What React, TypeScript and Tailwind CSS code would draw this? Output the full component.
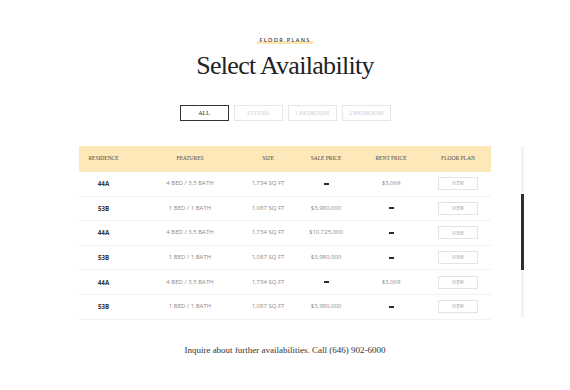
const rows = [
    {res: "44A", features: "4 BED / 3.5 BATH", size: "1,734 SQ FT", sale: "", rent: "$3,069"},
    {res: "53B", features: "1 BED / 1 BATH", size: "1,087 SQ FT", sale: "$3,980,000", rent: ""},
    {res: "44A", features: "4 BED / 3.5 BATH", size: "1,734 SQ FT", sale: "$10,725,000", rent: ""},
    {res: "53B", features: "1 BED / 1 BATH", size: "1,087 SQ FT", sale: "$3,980,000", rent: ""},
    {res: "44A", features: "4 BED / 3.5 BATH", size: "1,734 SQ FT", sale: "", rent: "$3,069"},
    {res: "53B", features: "1 BED / 1 BATH", size: "1,087 SQ FT", sale: "$3,980,000", rent: ""},
]

const tabs = ["ALL", "STUDIO", "1 BEDROOM", "2 BEDROOM"]

const serif = "font-['Liberation_Serif',serif]"
const sans = "font-['Open_Sans',sans-serif]"

function Dash() {
    return <span className="inline-block w-[5px] h-[2px] bg-[#2b2b2b]"/>
}

function Cell({children, className = ""}: { children?: React.ReactNode, className?: string }) {
    return <div className={`flex items-center justify-center whitespace-nowrap ${className}`}>{children}</div>
}

// column widths tuned so each column's centre sits where the picture has it
const cols = "grid grid-cols-[49px_124px_32px_84px_46px_77px]"

export default function App() {
    return (
        <div className="w-[570px] h-[390px] bg-white flex flex-col items-center overflow-hidden">
            <div className="mt-[36px] relative px-[2px]">
                <span className="absolute left-0 right-0 bottom-[0px] h-[3px] bg-[#fde6b2]"/>
                <span
                    className={`relative block ${sans} font-semibold text-[5.5px] leading-[8px] tracking-[1.3px] text-[#3a3a3a]`}>
                    FLOOR PLANS
                </span>
            </div>

            <h1 className={`mt-[7px] ${serif} text-[26px] leading-[30px] tracking-[-0.7px] text-[#222]`}>
                Select Availability
            </h1>

            <div className="mt-[24px] flex gap-[5px]">
                {tabs.map((t, i) => (
                    <div
                        key={t}
                        className={`w-[49px] h-[16px] flex items-center justify-center ${serif} text-[6px] ${
                            i === 0 ? "border border-[#333] text-[#222]" : "border border-[#e6e6e6] text-[#cfcfcf]"
                        }`}
                    >
                        {t}
                    </div>
                ))}
            </div>

            <div className="mt-[25px] flex self-start ml-[79px]">
                <div className="w-[412px]">
                    <div className={`${cols} h-[26px] pb-[1px] bg-[#fde8b9] ${serif} text-[5.5px] text-[#4a4a4a]`}>
                        <Cell>RESIDENCE</Cell>
                        <Cell>FEATURES</Cell>
                        <Cell>SIZE</Cell>
                        <Cell>SALE PRICE</Cell>
                        <Cell>RENT PRICE</Cell>
                        <Cell className="pl-[11px]">FLOOR PLAN</Cell>
                    </div>
                    {rows.map((r, i) => (
                        <div key={i}
                             className={`${cols} h-[24.6px] border-b border-[#f1f1f1] ${sans} text-[6px] text-[#8a8a8a]`}>
                            <Cell className="font-bold text-[#333] text-[6.2px]">{r.res}</Cell>
                            <Cell>{r.features}</Cell>
                            <Cell>{r.size}</Cell>
                            <Cell>{r.sale || <Dash/>}</Cell>
                            <Cell>{r.rent || <Dash/>}</Cell>
                            <Cell className="pl-[11px]">
                                <span
                                    className="w-[40px] h-[13px] border border-[#e4e4e4] flex items-center justify-center text-[4.5px] text-[#999] tracking-[0.3px]">
                                    VIEW
                                </span>
                            </Cell>
                        </div>
                    ))}
                </div>
                <div className="ml-[30px] w-[3px] h-[172px] bg-[#f3f3f3] flex flex-col">
                    <div className="mt-[48px] h-[76px] bg-[#2e2e2e]"/>
                </div>
            </div>

            <p className={`mt-[24px] ${serif} text-[9px] leading-[12px] text-[#333]`}>
                Inquire about further availabilities. Call (646) 902-6000
            </p>
        </div>
    )
}
